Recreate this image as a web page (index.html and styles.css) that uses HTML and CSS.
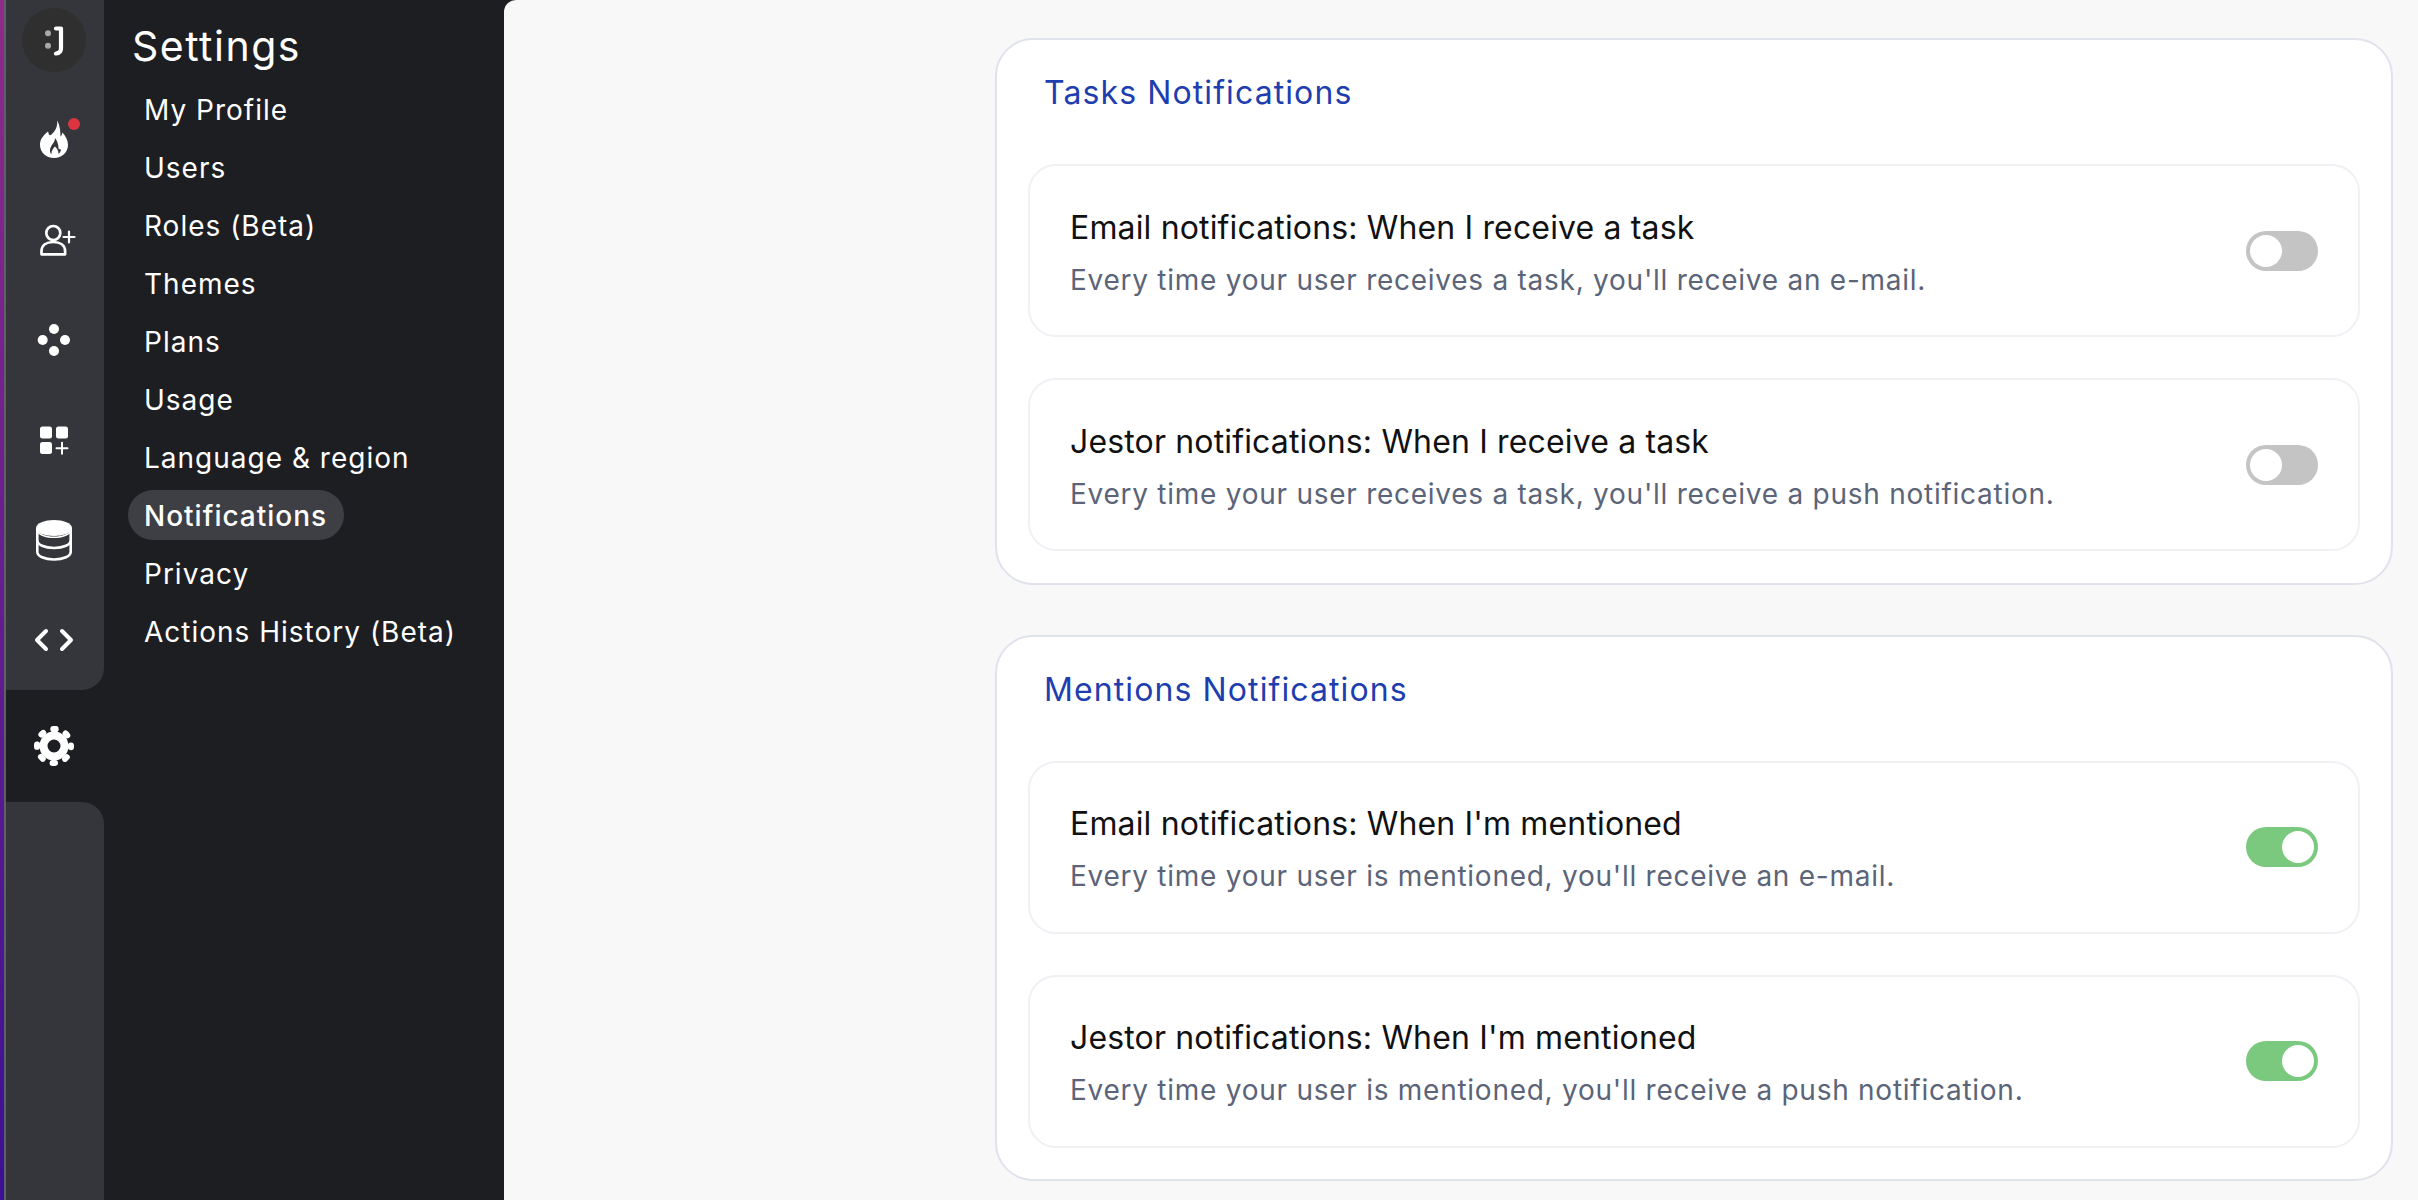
FILE: index.html
```html
<!DOCTYPE html>
<html lang="en">
<head>
<meta charset="utf-8">
<title>Settings - Notifications</title>
<link rel="stylesheet" href="styles.css">
</head>
<body>
<div class="app">
  <div class="strip"></div>
  <nav class="rail">
    <div class="rail-top">
      <div class="logo-cell">
        <svg class="logo" viewBox="0 0 64 64"><circle cx="32" cy="32" r="32" fill="#2f2f2f"/><circle cx="26" cy="25.300" r="3" fill="#a8a8a8"/><circle cx="26" cy="37.700" r="3" fill="#a8a8a8"/><path d="M34 20.500h5v20q0 4.500-5 5" fill="none" stroke="#fff" stroke-width="4.200" stroke-linecap="round" stroke-linejoin="round"/></svg>
      </div>
      <div class="rail-cell">
        <svg class="ico" viewBox="0 0 48 48"><path fill="#fff" d="M27 4.500C28 10 25.500 14.500 22 18 20.500 19.500 19.500 19.500 19 18.500 18.500 17.500 18.500 16.500 18 15.500 12 20.500 10 24 10 29 10 36 16 42 24 42 32 42 38 36 38 29 38 24 35.500 20 32.500 16.500 32 18.500 31.500 19.500 30.500 20.500 30.500 14 29.500 8 27 4.500z"/><path fill="#35363b" d="M25 22C25 27 20.500 29 20 34 19.800 36 20.500 37.500 21.500 38 21.200 35 23 32.500 25 30.500 27 32.500 28.800 35 28.500 38 30 37 31 35 30.800 33 30.300 33.500 29.500 33.500 28.500 32.500 28.500 28 27 24.500 25 22z"/></svg>
        <span class="badge"></span>
      </div>
      <div class="rail-cell">
        <svg class="ico" viewBox="0 0 48 48"><g fill="none" stroke="#fff" stroke-linecap="round" stroke-linejoin="round"><circle cx="23.300" cy="17" r="7" stroke-width="2.700"/><path stroke-width="2.700" d="M11.500 38.300v-3c0-6 5-9.300 11.800-9.300s11.800 3.300 11.800 9.300v3z"/><path stroke-width="2.200" d="M33.500 21h11M39 15.500v11"/></g></svg>
      </div>
      <div class="rail-cell">
        <svg class="ico" viewBox="0 0 48 48"><g fill="#fff"><circle cx="24" cy="13" r="5"/><circle cx="12.700" cy="24" r="5"/><circle cx="35" cy="24" r="5"/><circle cx="24" cy="35" r="5"/></g></svg>
      </div>
      <div class="rail-cell">
        <svg class="ico" viewBox="0 0 48 48"><g fill="#fff"><rect x="10" y="10.500" width="12" height="12" rx="2.500"/><rect x="26" y="10.500" width="12" height="12" rx="2.500"/><rect x="10" y="26" width="12" height="12" rx="2.500"/></g><path d="M26.500 32.300h11M32 26.800v11" stroke="#fff" stroke-width="2" stroke-linecap="round"/></svg>
      </div>
      <div class="rail-cell">
        <svg class="ico" viewBox="0 0 48 48"><path fill="#fff" d="M6 12c0-5 9-8 18-8s18 3 18 8-9 8-18 8-18-3-18-8z"/><g fill="none" stroke="#fff" stroke-width="2.600"><path d="M7.300 12v24c0 4 7 7.500 16.700 7.500s16.700-3.500 16.700-7.500V12"/><path d="M7.300 24.500c0 4 7 7.500 16.700 7.500s16.700-3.500 16.700-7.500"/></g><path fill="#fff" d="M7 14c2 4 9 6.500 17 6.500s15-2.500 17-6.500v2c-3 4-9 6-17 6s-14-2-17-6z"/></svg>
      </div>
      <div class="rail-cell">
        <svg class="ico" viewBox="0 0 48 48"><path d="M16 15l-9 9 9 9M32 15l9 9-9 9" fill="none" stroke="#fff" stroke-width="4" stroke-linecap="round" stroke-linejoin="round"/></svg>
      </div>
    </div>
    <div class="rail-active">
      <svg class="ico" viewBox="0 0 48 48"><g fill="none" stroke="#fff"><circle cx="24" cy="24" r="10.500" stroke-width="8"/><circle cx="24" cy="24" r="17" stroke-width="6" stroke-linecap="round" stroke-dasharray="2.500 10.851" stroke-dashoffset="1.250"/></g></svg>
    </div>
    <div class="rail-bottom"></div>
  </nav>
  <aside class="menu">
    <h1 class="menu-title">Settings</h1>
    <ul class="menu-list">
      <li class="menu-item">My Profile</li>
      <li class="menu-item">Users</li>
      <li class="menu-item">Roles (Beta)</li>
      <li class="menu-item">Themes</li>
      <li class="menu-item">Plans</li>
      <li class="menu-item">Usage</li>
      <li class="menu-item">Language &amp; region</li>
      <li class="menu-item is-active">Notifications</li>
      <li class="menu-item">Privacy</li>
      <li class="menu-item">Actions History (Beta)</li>
    </ul>
  </aside>
  <main class="main">
    <section class="card">
      <h2 class="card-title">Tasks Notifications</h2>
      <div class="row">
        <div class="row-text">
          <div class="row-title">Email notifications: When I receive a task</div>
          <div class="row-desc">Every time your user receives a task, you'll receive an e-mail.</div>
        </div>
        <span class="toggle"><span class="knob"></span></span>
      </div>
      <div class="row">
        <div class="row-text">
          <div class="row-title">Jestor notifications: When I receive a task</div>
          <div class="row-desc">Every time your user receives a task, you'll receive a push notification.</div>
        </div>
        <span class="toggle"><span class="knob"></span></span>
      </div>
    </section>
    <section class="card">
      <h2 class="card-title">Mentions Notifications</h2>
      <div class="row">
        <div class="row-text">
          <div class="row-title">Email notifications: When I'm mentioned</div>
          <div class="row-desc">Every time your user is mentioned, you'll receive an e-mail.</div>
        </div>
        <span class="toggle is-on"><span class="knob"></span></span>
      </div>
      <div class="row">
        <div class="row-text">
          <div class="row-title">Jestor notifications: When I'm mentioned</div>
          <div class="row-desc">Every time your user is mentioned, you'll receive a push notification.</div>
        </div>
        <span class="toggle is-on"><span class="knob"></span></span>
      </div>
    </section>
  </main>
</div>
</body>
</html>
```
FILE: styles.css
```css
* { box-sizing: border-box; }
html, body { margin: 0; height: 100%; overflow: hidden; }
body { font-family: Inter, "Liberation Sans", sans-serif; background: #1d1e22; }
.app { display: flex; height: 1200px; }

.strip { width: 6px; flex: none; background: linear-gradient(#8e2a8a, #3c1094); border-right: 2px solid #5e6066; }

.rail { width: 98px; flex: none; display: flex; flex-direction: column; }
.rail-top { height: 690px; padding-right: 2px; background: #35363b; border-bottom-right-radius: 22px; }
.logo-cell { height: 80px; margin-bottom: 10px; display: flex; align-items: center; justify-content: center; }
.logo { width: 64px; height: 64px; }
.rail-cell { position: relative; height: 100px; display: flex; align-items: center; justify-content: center; }
.ico { width: 48px; height: 48px; }
.badge { position: absolute; left: 62px; top: 28px; width: 12px; height: 12px; border-radius: 50%; background: #dc3540; }
.rail-active { height: 112px; padding-right: 2px; display: flex; align-items: center; justify-content: center; }
.rail-bottom { flex: 1; background: #35363b; border-top-right-radius: 22px; }

.menu { width: 400px; flex: none; padding: 0 24px; color: #fff; }
.menu-title { margin: 0; padding: 22px 0 0 4px; height: 84px; font-size: 41px; line-height: 48px; font-weight: 400; letter-spacing: 1.500px; }
.menu-list { list-style: none; margin: 0; padding: 0; display: flex; flex-direction: column; align-items: flex-start; gap: 8px; }
.menu-item { height: 50px; line-height: 53px; padding: 0 17px 0 16px; font-size: 28px; letter-spacing: 1px; border-radius: 25px; }
.menu-item.is-active { background: #3e3f44; font-weight: 500; }

.main { flex: 1; display: flex; flex-direction: column; align-items: flex-end; gap: 50px; padding: 38px 25px 0 0; background: #f8f8f8; border-top-left-radius: 12px; }
.card { width: 1398.500px; height: 546.500px; padding: 0 31px 0 31.500px; background: #fff; border: 2px solid #e1e3ec; border-radius: 38px; }
.card-title { margin: 0; height: 124px; padding: 31px 0 0 16px; font-size: 32px; line-height: 44px; font-weight: 400; letter-spacing: 1.100px; color: #1e3eaf; }
.row { display: flex; align-items: center; justify-content: space-between; height: 173px; padding: 0 40px; border: 2px solid #f0f0f5; border-radius: 28px; }
.row + .row { margin-top: 41px; }
.row-text { padding-top: 4px; }
.row-title { font-size: 32px; line-height: 40px; font-weight: 400; letter-spacing: 0.15px; color: #111; }
.row-desc { margin-top: 14px; font-size: 28px; line-height: 36px; letter-spacing: 0.74px; color: #5b6478; }

.toggle { width: 72px; height: 40px; padding: 4px; border-radius: 20px; background: #c4c4c4; display: flex; justify-content: flex-start; }
.toggle.is-on { background: #7ac97f; justify-content: flex-end; }
.knob { width: 32px; height: 32px; border-radius: 50%; background: #fff; }
```
